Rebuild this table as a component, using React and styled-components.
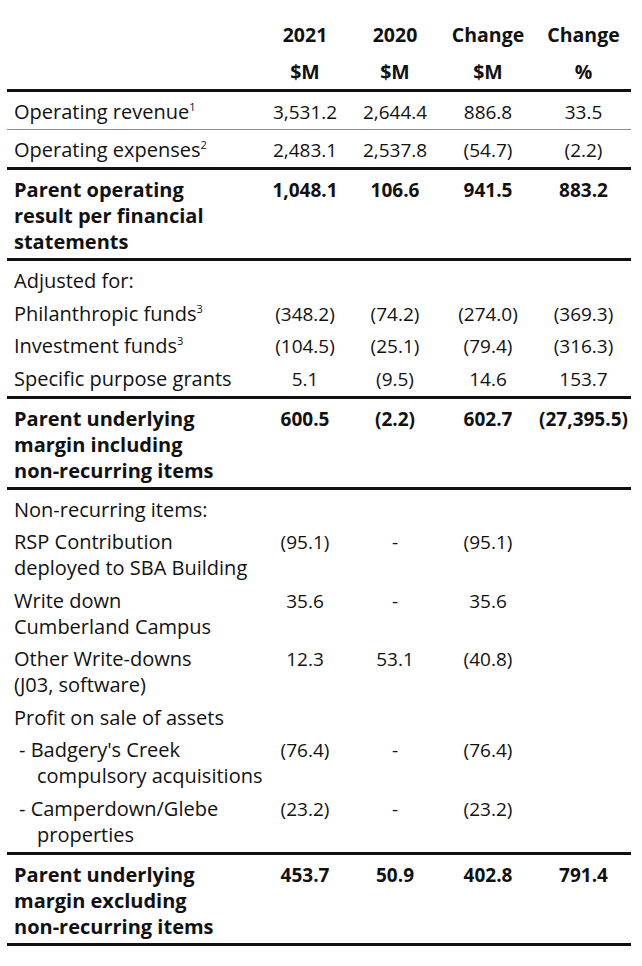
import styled, { createGlobalStyle } from "styled-components";

const GlobalStyle = createGlobalStyle`
  body {
    margin: 0;
    background: #fff;
    color: #111;
    font-family: "Open Sans", "Liberation Sans", sans-serif;
  }
`;

const groups = [
  {
    rule: "thin",
    items: [
      { label: ["Operating revenue"], sup: "1", values: ["3,531.2", "2,644.4", "886.8", "33.5"] },
    ],
  },
  {
    items: [
      { label: ["Operating expenses"], sup: "2", values: ["2,483.1", "2,537.8", "(54.7)", "(2.2)"] },
    ],
  },
  {
    items: [
      {
        label: ["Parent operating", "result per financial", "statements"],
        values: ["1,048.1", "106.6", "941.5", "883.2"],
        bold: true,
      },
    ],
  },
  {
    items: [
      { label: ["Adjusted for:"], values: [] },
      { label: ["Philanthropic funds"], sup: "3", values: ["(348.2)", "(74.2)", "(274.0)", "(369.3)"] },
      { label: ["Investment funds"], sup: "3", values: ["(104.5)", "(25.1)", "(79.4)", "(316.3)"] },
      { label: ["Specific purpose grants"], values: ["5.1", "(9.5)", "14.6", "153.7"] },
    ],
  },
  {
    items: [
      {
        label: ["Parent underlying", "margin including", "non-recurring items"],
        values: ["600.5", "(2.2)", "602.7", "(27,395.5)"],
        bold: true,
      },
    ],
  },
  {
    items: [
      { label: ["Non-recurring items:"], values: [] },
      { label: ["RSP Contribution", "deployed to SBA Building"], values: ["(95.1)", "-", "(95.1)", ""] },
      { label: ["Write down", "Cumberland Campus"], values: ["35.6", "-", "35.6", ""] },
      { label: ["Other Write-downs", "(J03, software)"], values: ["12.3", "53.1", "(40.8)", ""] },
      { label: ["Profit on sale of assets"], values: [] },
      { label: ["- Badgery's Creek", "compulsory acquisitions"], values: ["(76.4)", "-", "(76.4)", ""], indent: true },
      { label: ["- Camperdown/Glebe", "properties"], values: ["(23.2)", "-", "(23.2)", ""], indent: true },
    ],
  },
  {
    items: [
      {
        label: ["Parent underlying", "margin excluding", "non-recurring items"],
        values: ["453.7", "50.9", "402.8", "791.4"],
        bold: true,
      },
    ],
  },
];

function App() {
  return (
    <Page>
      <GlobalStyle />
      <Table>
        <colgroup>
          <col style={{ width: 253 }} />
          <col style={{ width: 90 }} />
          <col style={{ width: 90 }} />
          <col style={{ width: 96 }} />
          <col style={{ width: 95 }} />
        </colgroup>
        <thead>
          <tr>
            <HeadCell />
            <HeadCell>2021</HeadCell>
            <HeadCell>2020</HeadCell>
            <HeadCell>Change</HeadCell>
            <HeadCell>Change</HeadCell>
          </tr>
          <tr>
            <HeadCell />
            <HeadCell>$M</HeadCell>
            <HeadCell>$M</HeadCell>
            <HeadCell>$M</HeadCell>
            <HeadCell>%</HeadCell>
          </tr>
        </thead>
        {groups.map((group, gi) => (
          <Section key={gi} $rule={group.rule}>
            {group.items.map((row, ri) => (
              <Row
                key={ri}
                $first={ri === 0}
                $last={ri === group.items.length - 1}
                $bold={row.bold}
              >
                <LabelCell $bold={row.bold}>
                  {row.label.map((line, li) => (
                    <Line key={li} $indent={row.indent ? (li === 0 ? 5 : 23) : 0}>
                      {line}
                      {row.sup && li === row.label.length - 1 ? <Sup>{row.sup}</Sup> : null}
                    </Line>
                  ))}
                </LabelCell>
                {[0, 1, 2, 3].map((i) => (
                  <NumCell key={i} $bold={row.bold}>
                    {row.values[i] ?? ""}
                  </NumCell>
                ))}
              </Row>
            ))}
          </Section>
        ))}
      </Table>
    </Page>
  );
}

const Page = styled.div`
  padding: 17px 10px 20px 7px;
`;
const Table = styled.table`
  width: 624px;
  border-collapse: collapse;
  table-layout: fixed;
  font-size: 19px;
  line-height: 26px;
  thead {
    border-bottom: 3px solid #111;
  }
  thead tr:last-child th {
    padding-bottom: 4px;
  }
`;
const HeadCell = styled.th`
  font-weight: 700;
  font-size: 19.5px;
  text-align: center;
  padding: 5px 0 6px;
  white-space: nowrap;
`;
const Section = styled.tbody`
  border-bottom: ${({ $rule }) => ($rule === "thin" ? "1px solid #8c8c8c" : "3px solid #111")};
`;
const Row = styled.tr`
  td {
    padding-top: ${({ $first }) => ($first ? "7px" : "3px")};
    padding-bottom: ${({ $last, $bold }) => ($bold ? "3px" : $last ? "4px" : "3.5px")};
  }
`;
const LabelCell = styled.td`
  vertical-align: top;
  padding-left: 7px;
  font-size: 20px;
  font-weight: ${({ $bold }) => ($bold ? 700 : 400)};
`;
const Line = styled.div`
  white-space: nowrap;
  padding-left: ${({ $indent }) => $indent}px;
`;
const Sup = styled.sup`
  font-size: 11px;
  line-height: 0;
  vertical-align: 8px;
`;
const NumCell = styled.td`
  vertical-align: top;
  text-align: center;
  white-space: nowrap;
  font-weight: ${({ $bold }) => ($bold ? 700 : 400)};
`;

export default App;
